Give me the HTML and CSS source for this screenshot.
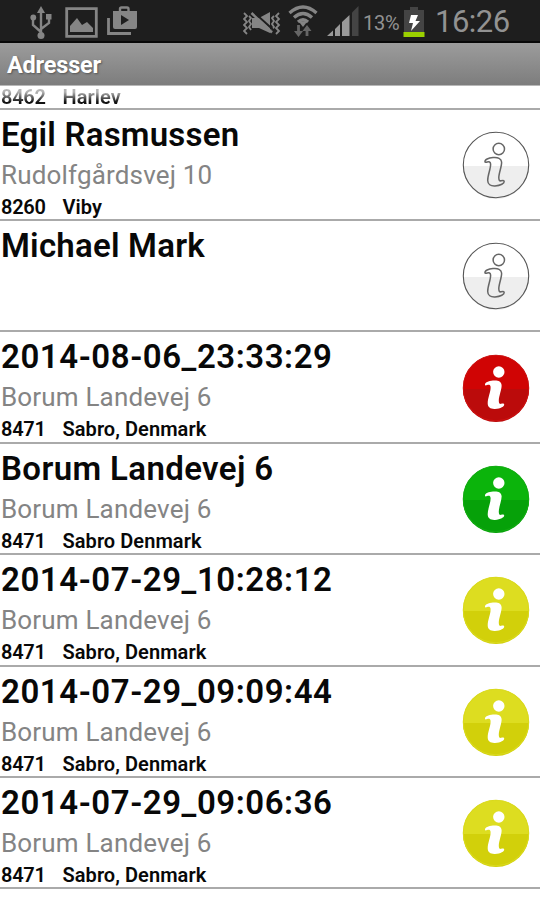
FILE: index.html
```
<!DOCTYPE html>
<html lang="da">
<head>
<meta charset="utf-8">
<title>Adresser</title>
<link rel="stylesheet" href="styles.css">
</head>
<body>
<svg class="defs" width="0" height="0" aria-hidden="true">
  <symbol id="info" viewBox="0 0 68 68">
    <circle class="disc" cx="34" cy="34" r="33"/>
    <path class="shade" d="M1 35H67A33 33 0 0 1 1 35Z"/>
    <circle class="ring" cx="34" cy="34" r="32.7"/>
    <circle class="glyph" cx="36.8" cy="18" r="5.7"/>
    <path class="glyph" d="M23 31C22.5 28.5 26.5 27 31 26.6C36 26.1 39.3 27.5 39.6 31C39.9 35 36.9 42 36.8 46.5C36.8 49 37.4 50.2 39 49.8C40.5 49.3 42 49 42.2 50.4C42.4 52.3 38.8 54.6 33 54.9C28.5 55.1 25.8 53.4 25.7 49.5C25.6 44 28.8 38 28.6 33C28.5 30.8 27 30.5 25.2 31C24 31.4 23.2 31.6 23 31Z"/>
  </symbol>
</svg>
<div class="screen">
  <header class="status">
    <svg class="usb" width="22" height="34" viewBox="0 0 22 34"><g fill="none" stroke="#858585" stroke-width="2.4"><path d="M11 5V28M11 26L3 19V11M11 23L19 17V11"/></g><g fill="#858585"><path d="M7 7L11 0L15 7Z"/><circle cx="11" cy="29.5" r="3.5"/><circle cx="3.3" cy="11.5" r="2.9"/><path d="M16 8H21.5V13.5H16Z"/></g></svg>
    <svg class="picture" width="33" height="31" viewBox="0 0 33 31"><path d="M1.7 1.7H31.3V29.3H1.7Z" fill="none" stroke="#858585" stroke-width="2.8"/><path d="M5 25V19L12 11L17 18L22 15L28 21V25Z" fill="#858585"/></svg>
    <svg class="play" width="30" height="30" viewBox="0 0 30 30"><path d="M1.5 12V27.5H24" fill="none" stroke="#858585" stroke-width="2.8"/><path d="M13 6V3Q13 1.5 14.5 1.5H20Q21.5 1.5 21.5 3V6" fill="none" stroke="#858585" stroke-width="2.4"/><path d="M6 5H30V21Q30 23 28 23H8Q6 23 6 21Z" fill="#858585"/><path d="M14 9V19L22 14Z" fill="#1e1e1e"/></svg>
    <span class="spacer"></span>
    <svg class="mute" width="38" height="26" viewBox="0 0 38 26"><path d="M1 3L4 6L1 9L4 12L1 15L4 18L1 21L4 24M6 6L8 8L6 11L8 14L6 17L8 20M36 3L33 6L36 9L33 12L36 15L33 18L36 21L33 24M31 6L29 8L31 11L29 14L31 17L29 20" fill="none" stroke="#858585" stroke-width="1.8"/><path d="M9 8H16L27 2V23L16 18H9Z" fill="#858585"/><path d="M10.5 2L31 20.5" stroke="#1e1e1e" stroke-width="2"/><path d="M8.5 3L29 22.5" stroke="#858585" stroke-width="2.5"/></svg>
    <svg class="wifi" width="30" height="33" viewBox="0 0 30 33"><g fill="none" stroke="#858585" stroke-width="3.3"><path d="M1.5 8Q15-4 28.5 8M6 12.5Q15 4.5 24 12.5M10 17Q15 12.5 20 17"/></g><path d="M15 22L11.5 17.5Q15 15 18.5 17.5Z" fill="#858585"/><path d="M10.5 20V29M19 31V23" stroke="#666" stroke-width="2.8"/><path d="M6 26H15L10.5 32ZM14.5 26L19 20L23.5 26Z" fill="#666"/></svg>
    <svg class="signal" width="32" height="31" viewBox="0 0 32 31"><path d="M0 30L6 24.5V30ZM8 23L13 18V30H8ZM15 16L22.5 9V30H15Z" fill="#999"/><path d="M25 6.5L31.5 0V30H25Z" fill="#444"/></svg>
    <span class="percent">13%</span>
    <svg class="battery" width="22" height="31" viewBox="0 0 22 31"><path d="M7 0H15V3H21V25H1V3H7Z" fill="#444"/><path d="M.5 25H21.5V30H.5Z" fill="#9bd000"/><path d="M8 8H15L12.5 14H17L8 24L10 16H6Z" fill="#fff"/></svg>
    <span class="clock">16:26</span>
  </header>
  <div class="titlebar"><h1>Adresser</h1></div>
  <main class="list">
    <div class="row partial"><div class="place"><span class="zip">8462</span><span class="city">Harlev</span></div></div>
    <article class="row"><div class="text"><h2>Egil Rasmussen</h2><p>Rudolfgårdsvej 10</p><div class="place"><span class="zip">8260</span><span class="city">Viby</span></div></div><svg class="info plain"><use href="#info"/></svg></article>
    <article class="row"><div class="text"><h2>Michael Mark</h2></div><svg class="info plain"><use href="#info"/></svg></article>
    <article class="row"><div class="text"><h2 class="date">2014-08-06_23:33:29</h2><p>Borum Landevej 6</p><div class="place"><span class="zip">8471</span><span class="city">Sabro, Denmark</span></div></div><svg class="info red"><use href="#info"/></svg></article>
    <article class="row"><div class="text"><h2 class="road">Borum Landevej 6</h2><p>Borum Landevej 6</p><div class="place"><span class="zip">8471</span><span class="city">Sabro Denmark</span></div></div><svg class="info green"><use href="#info"/></svg></article>
    <article class="row"><div class="text"><h2 class="date">2014-07-29_10:28:12</h2><p>Borum Landevej 6</p><div class="place"><span class="zip">8471</span><span class="city">Sabro, Denmark</span></div></div><svg class="info yellow"><use href="#info"/></svg></article>
    <article class="row"><div class="text"><h2 class="date">2014-07-29_09:09:44</h2><p>Borum Landevej 6</p><div class="place"><span class="zip">8471</span><span class="city">Sabro, Denmark</span></div></div><svg class="info yellow"><use href="#info"/></svg></article>
    <article class="row"><div class="text"><h2 class="date">2014-07-29_09:06:36</h2><p>Borum Landevej 6</p><div class="place"><span class="zip">8471</span><span class="city">Sabro, Denmark</span></div></div><svg class="info yellow"><use href="#info"/></svg></article>
  </main>
</div>
</body>
</html>
```
FILE: styles.css
```
* { box-sizing: border-box; margin: 0; padding: 0; }
body { width: 540px; height: 900px; overflow: hidden; background: #fff; font-family: Roboto, "Liberation Sans", sans-serif; color: #080808; }
.defs { display: block; height: 0; }
.screen { display: flex; flex-direction: column; height: 900px; overflow: hidden; }
.status { flex: none; height: 43px; background: #1e1e1e; border-bottom: 2px solid #080808; display: flex; align-items: flex-start; padding: 6px 31px 0 30px; color: #929292; }
.status svg { flex: none; display: block; }
.picture { margin: 1px 0 0 13px; }
.play { margin: 0 0 0 9px; }
.spacer { flex: 1; }
.mute { margin: 4px 7px 0 0; }
.wifi { margin: -1px 9px 0 0; }
.signal { margin: 0 4px 0 0; }
.percent { width: 38px; font-size: 20px; line-height: 34px; letter-spacing: -.2px; margin-right: 2px; white-space: nowrap; }
.battery { margin: 1px 10px 0 0; }
.clock { width: 74px; font-size: 31px; line-height: 31px; letter-spacing: -.5px; white-space: nowrap; }
.titlebar { flex: none; height: 43px; background: linear-gradient(#9c9c9c, #7d7d7d); border-bottom: 1px solid #b8b8b8; padding-left: 7px; }
.titlebar h1 { font-size: 23.5px; line-height: 45px; letter-spacing: -.2px; font-weight: 700; color: #fff; text-shadow: 1px 1px 2px #555; }
.list { flex: 1; min-height: 0; overflow: hidden; }
.row { height: 111.4px; border-bottom: 2px solid #aaa; display: flex; justify-content: space-between; align-items: center; background: #fff; }
.row.partial { height: 23.6px; align-items: flex-end; padding: 0 0 1px 1px; }
.partial .place { height: 20px; line-height: 20px; background: linear-gradient(#b5b5b5 25%, #111 75%); background-clip: text; color: transparent; }
.text { align-self: flex-start; padding-left: 1px; }
h2 { font-size: 33px; line-height: 40px; height: 45px; padding-top: 5px; font-weight: 600; letter-spacing: .22px; white-space: nowrap; }
.date { letter-spacing: .56px; }
.road { letter-spacing: .38px; }
p { font-size: 26px; line-height: 37px; height: 38px; margin-top: 2px; color: #848484; font-weight: 375; letter-spacing: .17px; white-space: nowrap; }
.place { display: flex; height: 25px; line-height: 25px; font-size: 20px; font-weight: 600; letter-spacing: .06px; white-space: nowrap; }
.zip { width: 61.5px; letter-spacing: -.3px; }
.info { flex: none; width: 68px; height: 68px; margin: 1px 10.3px 0 0; }
.disc { fill: var(--top); }
.shade { fill: var(--low); }
.ring { fill: none; stroke: var(--ring); stroke-width: 1.1; }
.glyph { fill: var(--glyph); stroke: var(--line); stroke-width: 1.5; }
.plain { --top: #fff; --low: #eee; --ring: #555; --glyph: none; --line: #666; }
.red { --top: #d00404; --low: #bb0b0b; --ring: #cb1111; --glyph: #fff; --line: none; }
.green { --top: #0bb40b; --low: #06a109; --ring: #12ab12; --glyph: #fff; --line: none; }
.yellow { --top: #dddd20; --low: #d2d00a; --ring: #d9d91c; --glyph: #fff; --line: none; }
```
